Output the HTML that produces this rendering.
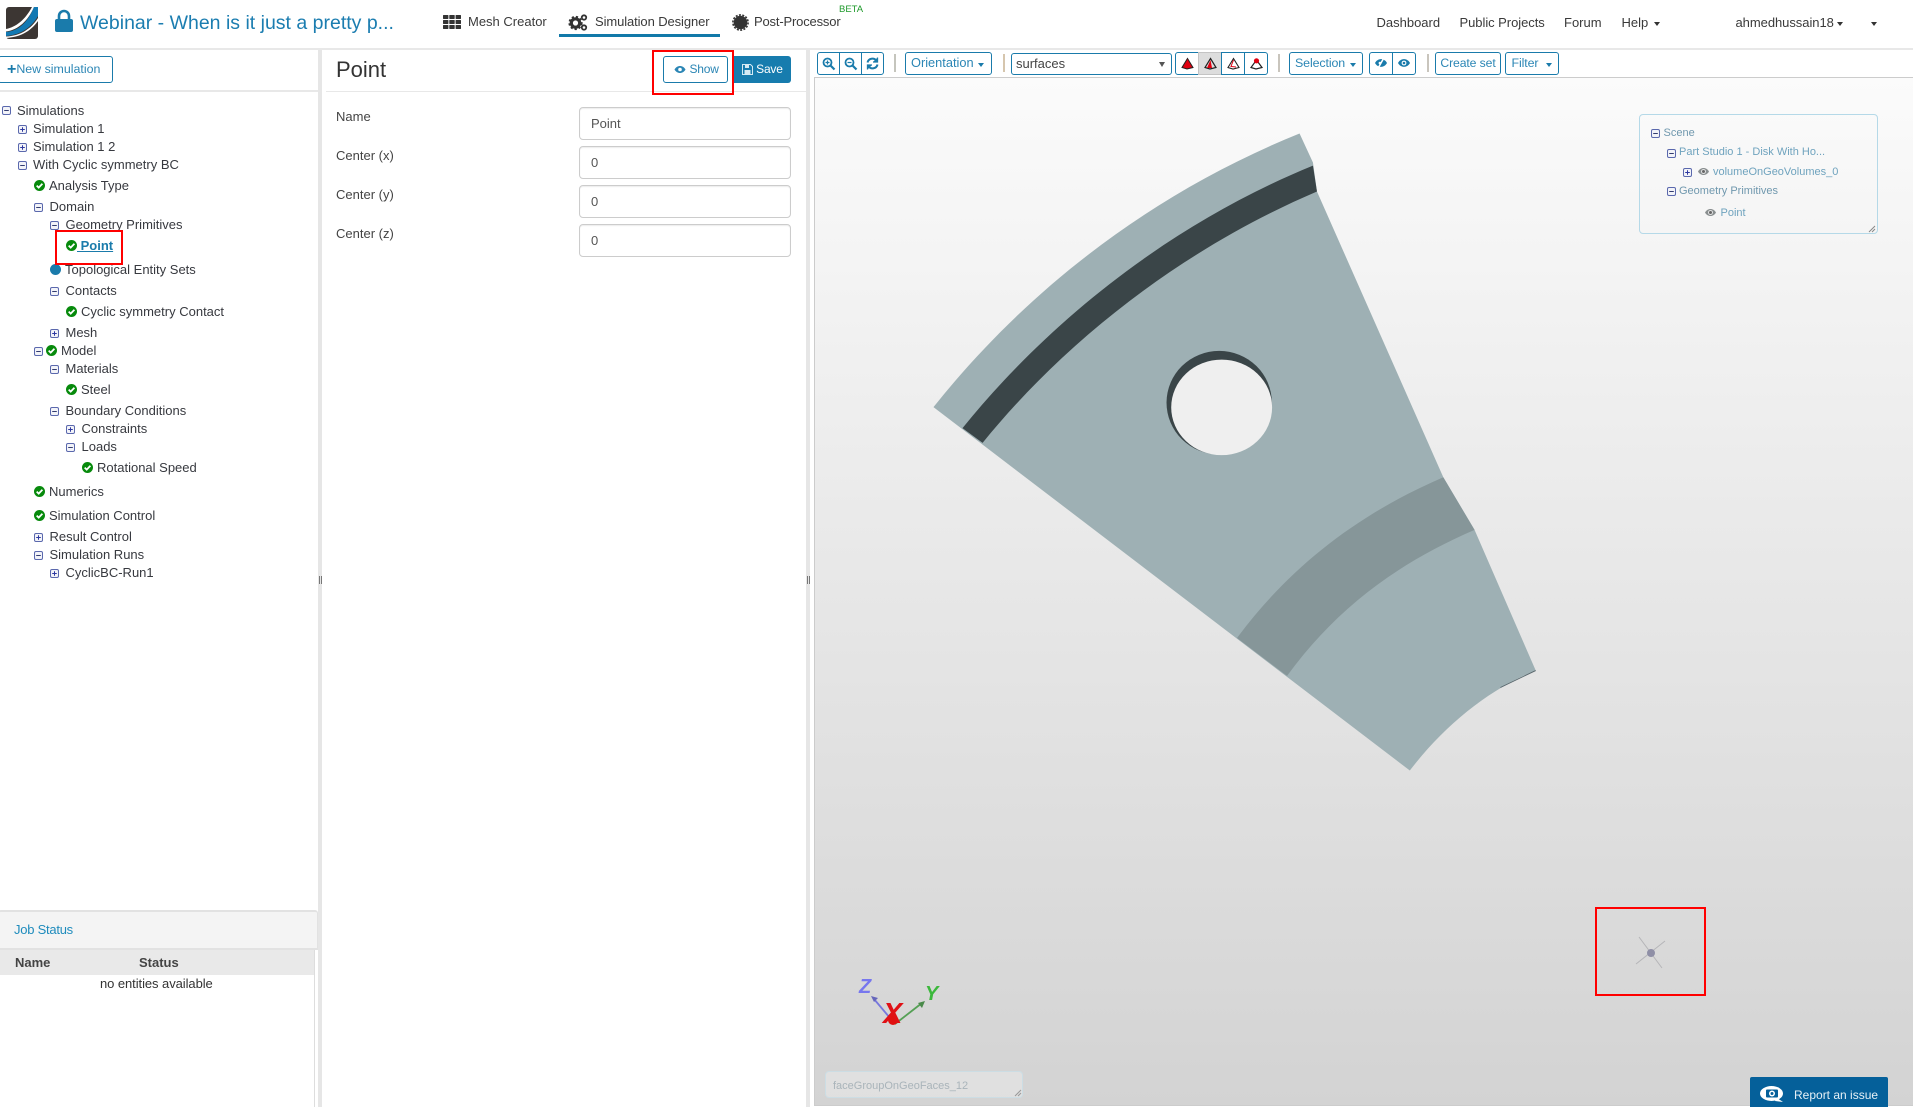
<!DOCTYPE html>
<html><head><meta charset="utf-8"><title>Simulation Designer</title>
<style>
html,body{margin:0;padding:0;background:#fff}
#p{position:relative;width:1913px;height:1107px;overflow:hidden;font-family:"Liberation Sans",sans-serif;font-size:13px;color:#333}
.t{position:absolute;white-space:nowrap;line-height:20px;height:20px}
.b{position:absolute;box-sizing:border-box}
.tr{font-size:13px;color:#37393f}
.nav{color:#3a3a3a}
.btn{position:absolute;box-sizing:border-box;border:1.5px solid #1a7bab;border-radius:3px;color:#2b86b5;background:#fff;text-align:center;line-height:20px;white-space:nowrap;font-size:12.2px;height:23px}
.caret{position:absolute;width:0;height:0;border-left:3.5px solid transparent;border-right:3.5px solid transparent;border-top:4px solid #333}
.inp{position:absolute;left:579px;width:212px;height:33px;box-sizing:border-box;border:1px solid #ccc;border-radius:4px;background:#fff;color:#555;padding-left:11px;line-height:32px;font-size:13px;box-shadow:inset 0 1px 1px rgba(0,0,0,.075)}
.lab{left:336px;color:#444;font-size:13px}
.red{position:absolute;box-sizing:border-box;border:2px solid #f00;z-index:9}
svg.i{position:absolute;overflow:visible}
.sc{position:absolute;white-space:nowrap;font-size:11px;line-height:14px;color:#6fa3be}
</style></head><body><div id="p">
<svg width="0" height="0" style="position:absolute"><defs>
<g id="m"><rect x=".5" y=".5" width="8" height="8" rx="1.5" fill="#f2f3f8" stroke="#5a68ad"/><path d="M2.2 4.5h4.6" stroke="#333c70" stroke-width="1"/></g>
<g id="l"><rect x=".5" y=".5" width="8" height="8" rx="1.5" fill="#f2f3f8" stroke="#5a68ad"/><path d="M2.2 4.5h4.6M4.5 2.2v4.6" stroke="#2d38a0" stroke-width="1"/></g>
<g id="c"><circle cx="5.5" cy="5.5" r="5.5" fill="#078a0c"/><path d="M2.7 5.6l2 2 3.7-3.8" fill="none" stroke="#fff" stroke-width="1.8"/></g>
<g id="e"><path d="M0 4.5C2.5 -.2 8.5 -.2 11 4.5 8.5 9.2 2.5 9.2 0 4.5z" fill="#8a8f90"/><circle cx="5.5" cy="4.5" r="2.4" fill="#eee"/><circle cx="5.5" cy="4.5" r="1.5" fill="#666"/></g>
</defs></svg>

<!-- navbar -->
<div class="b" style="left:0;top:48px;width:1913px;height:2px;background:#e8e8e8"></div>
<svg class="i" style="left:6px;top:7px" width="32" height="32" viewBox="0 0 32 32"><rect width="32" height="32" rx="3" fill="#3c3633"/><path d="M0 22C10 20 19 13 26 0H28C22 14 12 23 0 24.5z" fill="#fff"/><path d="M0 25C13 24 22 15 28 0H32V9C25 21 14 28 0 29z" fill="#1279b3"/><path d="M0 29.5C14 29 25 22 32 11V14C24 25 14 30 0 31z" fill="#fff"/></svg>
<svg class="i" style="left:55px;top:10px" width="18" height="22" viewBox="0 0 18 22"><path d="M4 10V6a5 5 0 0 1 10 0v4" fill="none" stroke="#1a7bab" stroke-width="2.6"/><rect x="0" y="9" width="18" height="13" rx="2" fill="#1a7bab"/></svg>
<div class="t" style="left:80px;top:13px;font-size:19.5px;line-height:20px;color:#1b7db0">Webinar - When is it just a pretty p...</div>

<svg class="i" style="left:443px;top:15px" width="18" height="14" viewBox="0 0 18 14" fill="#333"><rect width="5.4" height="4" rx=".6"/><rect x="6.3" width="5.4" height="4" rx=".6"/><rect x="12.6" width="5.4" height="4" rx=".6"/><rect y="5" width="5.4" height="4" rx=".6"/><rect x="6.3" y="5" width="5.4" height="4" rx=".6"/><rect x="12.6" y="5" width="5.4" height="4" rx=".6"/><rect y="10" width="5.4" height="4" rx=".6"/><rect x="6.3" y="10" width="5.4" height="4" rx=".6"/><rect x="12.6" y="10" width="5.4" height="4" rx=".6"/></svg>
<div class="t nav" style="left:468px;top:12px">Mesh Creator</div>
<svg class="i" style="left:569px;top:14px" width="19" height="17" viewBox="0 0 19 17"><circle cx="6.5" cy="9" r="4.2" fill="none" stroke="#333" stroke-width="3.2"/><circle cx="6.5" cy="9" r="6.2" fill="none" stroke="#333" stroke-width="1.8" stroke-dasharray="2.2 2"/><circle cx="15" cy="3.5" r="2.2" fill="none" stroke="#333" stroke-width="1.8"/><circle cx="15" cy="13.5" r="2.2" fill="none" stroke="#333" stroke-width="1.8"/></svg>
<div class="t nav" style="left:595px;top:12px;letter-spacing:-.1px">Simulation Designer</div>
<div class="b" style="left:559px;top:34px;width:161px;height:3px;background:#1279a9"></div>
<svg class="i" style="left:732px;top:14px" width="17" height="17" viewBox="0 0 17 17"><circle cx="8.5" cy="8.5" r="6.8" fill="#333"/><circle cx="8.5" cy="8.5" r="7.6" fill="none" stroke="#333" stroke-width="1.6" stroke-dasharray="2 1.4"/></svg>
<div class="t nav" style="left:754px;top:12px;letter-spacing:-.17px">Post-Processor</div>
<div class="t" style="left:839px;top:0;font-size:9.5px;color:#1e9a2b">BETA</div>
<div class="t nav" style="left:1376.5px;top:13px">Dashboard</div>
<div class="t nav" style="left:1459.5px;top:13px;letter-spacing:-.05px">Public Projects</div>
<div class="t nav" style="left:1564px;top:13px">Forum</div>
<div class="t nav" style="left:1621.5px;top:13px">Help</div>
<div class="caret" style="left:1654px;top:22px"></div>
<div class="t nav" style="left:1735.5px;top:13px;letter-spacing:-.05px">ahmedhussain18</div>
<div class="caret" style="left:1837px;top:22px"></div>
<div class="caret" style="left:1870.5px;top:22px"></div>

<!-- dividers -->
<div class="b" style="left:318px;top:50px;width:4px;height:1057px;background:#e6e6e6"></div>
<div class="b" style="left:806px;top:50px;width:4px;height:1057px;background:#e6e6e6"></div>
<div class="b" style="left:319px;top:576px;width:3px;height:8px;border-left:1px solid #777;border-right:1px solid #777"></div>
<div class="b" style="left:807px;top:576px;width:3px;height:8px;border-left:1px solid #777;border-right:1px solid #777"></div>

<!-- left panel -->
<div class="btn" style="left:-2px;top:56px;width:115px;height:27px;line-height:24px;color:#2b86b5;font-size:12.4px;text-align:left;padding-left:8px"><b style="font-size:16px;line-height:12px;vertical-align:-1px;color:#1a7bab">+</b>New simulation</div>
<div class="b" style="left:0;top:90px;width:318px;height:2px;background:#e8e8e8"></div>

<svg class="i" style="left:2px;top:106px" width="9" height="9"><use href="#m"/></svg><div class="t tr" style="left:17px;top:101px">Simulations</div>
<svg class="i" style="left:18px;top:125px" width="9" height="9"><use href="#l"/></svg><div class="t tr" style="left:33px;top:119px">Simulation 1</div>
<svg class="i" style="left:18px;top:143px" width="9" height="9"><use href="#l"/></svg><div class="t tr" style="left:33px;top:137px">Simulation 1 2</div>
<svg class="i" style="left:18px;top:161px" width="9" height="9"><use href="#m"/></svg><div class="t tr" style="left:33px;top:155px">With Cyclic symmetry BC</div>
<svg class="i" style="left:34px;top:180px" width="11" height="11"><use href="#c"/></svg><div class="t tr" style="left:49px;top:176px">Analysis Type</div>
<svg class="i" style="left:34px;top:203px" width="9" height="9"><use href="#m"/></svg><div class="t tr" style="left:49.5px;top:197px">Domain</div>
<svg class="i" style="left:50px;top:221px" width="9" height="9"><use href="#m"/></svg><div class="t tr" style="left:65.5px;top:215px">Geometry Primitives</div>
<svg class="i" style="left:66px;top:240px" width="11" height="11"><use href="#c"/></svg><div class="t tr" style="left:77px;top:236px;color:#1a7bab;font-weight:bold;text-decoration:underline;white-space:pre;font-size:13px"> Point</div>
<div class="red" style="left:55px;top:230px;width:68px;height:35px"></div>
<svg class="i" style="left:50px;top:264px" width="11" height="11"><circle cx="5.5" cy="5.5" r="5.5" fill="#1a7bab"/></svg><div class="t tr" style="left:65px;top:260px">Topological Entity Sets</div>
<svg class="i" style="left:50px;top:287px" width="9" height="9"><use href="#m"/></svg><div class="t tr" style="left:65.5px;top:281px">Contacts</div>
<svg class="i" style="left:66px;top:306px" width="11" height="11"><use href="#c"/></svg><div class="t tr" style="left:81px;top:302px">Cyclic symmetry Contact</div>
<svg class="i" style="left:50px;top:329px" width="9" height="9"><use href="#l"/></svg><div class="t tr" style="left:65.5px;top:323px">Mesh</div>
<svg class="i" style="left:34px;top:347px" width="9" height="9"><use href="#m"/></svg><svg class="i" style="left:46px;top:345px" width="11" height="11"><use href="#c"/></svg><div class="t tr" style="left:61px;top:341px">Model</div>
<svg class="i" style="left:50px;top:365px" width="9" height="9"><use href="#m"/></svg><div class="t tr" style="left:65.5px;top:359px">Materials</div>
<svg class="i" style="left:66px;top:384px" width="11" height="11"><use href="#c"/></svg><div class="t tr" style="left:81px;top:380px">Steel</div>
<svg class="i" style="left:50px;top:407px" width="9" height="9"><use href="#m"/></svg><div class="t tr" style="left:65.5px;top:401px">Boundary Conditions</div>
<svg class="i" style="left:66px;top:425px" width="9" height="9"><use href="#l"/></svg><div class="t tr" style="left:81.5px;top:419px">Constraints</div>
<svg class="i" style="left:66px;top:443px" width="9" height="9"><use href="#m"/></svg><div class="t tr" style="left:81.5px;top:437px">Loads</div>
<svg class="i" style="left:82px;top:462px" width="11" height="11"><use href="#c"/></svg><div class="t tr" style="left:97px;top:458px">Rotational Speed</div>
<svg class="i" style="left:34px;top:486px" width="11" height="11"><use href="#c"/></svg><div class="t tr" style="left:49px;top:482px">Numerics</div>
<svg class="i" style="left:34px;top:510px" width="11" height="11"><use href="#c"/></svg><div class="t tr" style="left:49px;top:506px">Simulation Control</div>
<svg class="i" style="left:34px;top:533px" width="9" height="9"><use href="#l"/></svg><div class="t tr" style="left:49.5px;top:527px">Result Control</div>
<svg class="i" style="left:34px;top:551px" width="9" height="9"><use href="#m"/></svg><div class="t tr" style="left:49.5px;top:545px">Simulation Runs</div>
<svg class="i" style="left:50px;top:569px" width="9" height="9"><use href="#l"/></svg><div class="t tr" style="left:65.5px;top:563px">CyclicBC-Run1</div>

<!-- job status -->
<div class="b" style="left:-2px;top:910px;width:320px;height:40px;background:#f4f4f4;border:1px solid #e2e2e2;border-top:2px solid #e2e2e2;border-bottom:2px solid #e2e2e2;border-radius:3px 3px 0 0"></div>
<div class="t" style="left:14px;top:920px;color:#1f8cbd;font-size:13px;letter-spacing:-.25px">Job Status</div>
<div class="b" style="left:0;top:950px;width:314px;height:25px;background:#e9e9e9"></div>
<div class="b" style="left:314px;top:950px;width:1px;height:157px;background:#ddd"></div>
<div class="t" style="left:15px;top:952.5px;font-weight:bold;color:#444">Name</div>
<div class="t" style="left:139px;top:952.5px;font-weight:bold;color:#444">Status</div>
<div class="t" style="left:100px;top:974px;color:#333;font-size:13px;letter-spacing:-.07px">no entities available</div>

<!-- middle panel -->
<div class="t" style="left:336px;top:60px;font-size:22px;color:#333">Point</div>
<div class="b" style="left:326px;top:91px;width:480px;height:1px;background:#e8e8e8"></div>
<div class="btn" style="left:663px;top:56px;width:65px;height:27px;line-height:24px;padding-left:2px;font-size:12px;letter-spacing:-.2px"><svg width="12" height="9" viewBox="0 0 11 9" style="vertical-align:-1px"><path d="M0 4.5C2.5 -.2 8.5 -.2 11 4.5 8.5 9.2 2.5 9.2 0 4.5z" fill="#2b86b5"/><circle cx="5.5" cy="4.5" r="1.8" fill="#fff"/></svg> Show</div>
<div class="b" style="left:733px;top:56px;width:58px;height:27px;background:#177cae;border-radius:0 3px 3px 0;color:#fff;font-size:12px;letter-spacing:-.2px;line-height:26px;padding-left:9px"><svg width="11" height="11" viewBox="0 0 11 11" style="vertical-align:-1.5px"><path d="M.5.5h8l2 2v8H.5z" fill="none" stroke="#d5eaf4"/><rect x="3" y="1" width="4" height="3" fill="#d5eaf4"/><rect x="2.5" y="6" width="6" height="4" fill="#d5eaf4"/></svg> Save</div>
<div class="red" style="left:652px;top:50px;width:82px;height:45px"></div>
<div class="t lab" style="top:107px">Name</div>
<div class="t lab" style="top:146px">Center (x)</div>
<div class="t lab" style="top:185px">Center (y)</div>
<div class="t lab" style="top:224px">Center (z)</div>
<div class="inp" style="top:107px">Point</div>
<div class="inp" style="top:146px">0</div>
<div class="inp" style="top:185px">0</div>
<div class="inp" style="top:224px">0</div>

<!-- toolbar -->
<div class="btn" style="left:817px;top:52px;width:22.5px;border-radius:3px 0 0 3px"></div>
<div class="btn" style="left:838.5px;top:52px;width:23px;border-radius:0"></div>
<div class="btn" style="left:860.5px;top:52px;width:23px;border-radius:0 3px 3px 0"></div>
<svg class="i" style="left:822px;top:57px" width="13" height="13" viewBox="0 0 13 13" fill="none" stroke="#1a7bab" stroke-width="1.8"><circle cx="5.5" cy="5.5" r="4"/><path d="M8.5 8.5l4 4" stroke-width="2.2"/><path d="M3.5 5.5h4M5.5 3.5v4" stroke-width="1.2"/></svg>
<svg class="i" style="left:844px;top:57px" width="13" height="13" viewBox="0 0 13 13" fill="none" stroke="#1a7bab" stroke-width="1.8"><circle cx="5.5" cy="5.5" r="4"/><path d="M8.5 8.5l4 4" stroke-width="2.2"/><path d="M3.5 5.5h4" stroke-width="1.2"/></svg>
<svg class="i" style="left:866px;top:57px" width="13" height="13" viewBox="0 0 13 13" fill="none" stroke="#1a7bab" stroke-width="2"><path d="M1.5 5.5A5 5 0 0 1 10.5 3.8M11.5 7.5A5 5 0 0 1 2.5 9.2"/><path d="M11.5 0.5v4.5h-4.5M1.5 12.5V8h4.5" stroke-width="1.3" fill="#1a7bab"/></svg>
<div class="b" style="left:894px;top:54px;width:2px;height:18px;background:#c5c5bd"></div>
<div class="btn" style="left:905px;top:52px;width:87px;text-align:left;padding-left:5px;font-size:12.8px">Orientation</div>
<div class="caret" style="left:978px;top:63px;border-top-color:#1a7bab"></div>
<div class="b" style="left:1003px;top:54px;width:2px;height:18px;background:#d6c6ae"></div>
<div class="b" style="left:1011px;top:53px;width:161px;height:22px;border:1.5px solid #1a7bab;border-radius:3px;background:#fff;color:#444;font-size:13px;line-height:19px;padding-left:4px">surfaces</div>
<svg class="i" style="left:1159px;top:62px" width="6" height="5"><path d="M0 0h6L3 5z" fill="#555"/></svg>
<div class="btn" style="left:1175px;top:52px;width:24px;border-radius:3px 0 0 3px"></div>
<div class="btn" style="left:1198px;top:52px;width:24px;border-radius:0;background:#ddd;border-color:#c4c4c4"></div>
<div class="btn" style="left:1221px;top:52px;width:24px;border-radius:0"></div>
<div class="btn" style="left:1244px;top:52px;width:24px;border-radius:0 3px 3px 0"></div>
<svg class="i" style="left:1181px;top:58px" width="13" height="12" viewBox="0 0 13 12"><path d="M6.5 .5L12 9.5 6 11 1 9.5z" fill="#e00010" stroke="#222" stroke-width="1"/><path d="M6.5 1L4 9h6z" fill="#e00010"/></svg>
<svg class="i" style="left:1204px;top:58px" width="13" height="12" viewBox="0 0 13 12"><path d="M6.5 .5L12 9.5 6 11 1 9.5z" fill="none" stroke="#222" stroke-width="1.2"/><path d="M6.5 2L8 10 3 10z" fill="#e00010"/></svg>
<svg class="i" style="left:1227px;top:58px" width="13" height="12" viewBox="0 0 13 12"><path d="M6.5 .5L12 9.5 6 11 1 9.5z" fill="none" stroke="#222" stroke-width="1.1"/><path d="M6.5 2L4 8.5 9 9" fill="none" stroke="#e00010" stroke-width="1"/></svg>
<svg class="i" style="left:1250px;top:58px" width="13" height="12" viewBox="0 0 13 12"><path d="M6.5 2L12 9.5 6 11 1 9.5z" fill="none" stroke="#222" stroke-width="1.2"/><circle cx="6.5" cy="2.8" r="2.6" fill="#e00010"/></svg>
<div class="b" style="left:1278px;top:54px;width:2px;height:18px;background:#c9c5bd"></div>
<div class="btn" style="left:1289px;top:52px;width:73.5px;text-align:left;padding-left:5px;font-size:12.4px;letter-spacing:-.1px">Selection</div>
<div class="caret" style="left:1350px;top:63px;border-top-color:#1a7bab"></div>
<div class="btn" style="left:1369px;top:52px;width:24px;border-radius:3px 0 0 3px"></div>
<div class="btn" style="left:1392px;top:52px;width:23.5px;border-radius:0 3px 3px 0"></div>
<svg class="i" style="left:1375px;top:58px" width="12" height="10" viewBox="0 0 11 9"><path d="M0 4.5C2.5 -.2 8.5 -.2 11 4.5 8.5 9.2 2.5 9.2 0 4.5z" fill="#1a7bab"/><path d="M3 9L8 0" stroke="#fff" stroke-width="1.4"/><circle cx="4.5" cy="4.5" r="1.2" fill="#fff"/></svg>
<svg class="i" style="left:1398px;top:58px" width="12" height="10" viewBox="0 0 11 9"><path d="M0 4.5C2.5 -.2 8.5 -.2 11 4.5 8.5 9.2 2.5 9.2 0 4.5z" fill="#1a7bab"/><circle cx="5.5" cy="4.5" r="2.2" fill="#fff"/><circle cx="5.5" cy="4.5" r="1.2" fill="#1a7bab"/></svg>
<div class="b" style="left:1426.5px;top:54px;width:2px;height:18px;background:#c9c5bd"></div>
<div class="btn" style="left:1435px;top:52px;width:66px;font-size:12.2px;letter-spacing:-.1px">Create set</div>
<div class="btn" style="left:1505px;top:52px;width:53.5px;text-align:left;padding-left:5.5px;font-size:12.4px;letter-spacing:-.1px">Filter</div>
<div class="caret" style="left:1545.5px;top:63px;border-top-color:#1a7bab"></div>

<!-- viewport -->
<div class="b" style="left:814px;top:77px;width:1099px;height:1029px;border-left:1px solid #ccc;border-top:1px solid #ccc;border-bottom:1px solid #ccc;background:linear-gradient(#fbfbfb,#d3d3d3)"></div>

<svg class="i" style="left:900px;top:100px" width="700" height="700" viewBox="0 0 1568 1568">
<path d="M895 75L925 140 934 205 1217 845 1287 963 1424 1278C1320 1320 1220 1400 1142 1502L75 688C280 430 560 210 895 75z" fill="#9eb0b4"/>
<path d="M140 735C330 500 600 280 925 147L934 205C630 335 370 540 185 768z" fill="#3a4548"/>
<path d="M755 1205C870 1050 1020 930 1217 845L1287 963C1120 1035 980 1135 867 1290z" fill="#869699"/>
<path d="M1345 1316L1424 1278" stroke="#56646a" stroke-width="2" fill="none"/>
<ellipse cx="715" cy="678" rx="118" ry="116" fill="#3a4548"/>
<ellipse cx="720.5" cy="688.5" rx="113" ry="107" fill="#efefef"/>
</svg>

<!-- scene panel -->
<div class="b" style="left:1638.5px;top:114px;width:239px;height:120px;border:1px solid #b5d9e8;border-radius:4px"></div>
<svg class="i" style="left:1868px;top:225px" width="8" height="8"><path d="M1 7L7 1M4 7L7 4" stroke="#888" stroke-width="1"/></svg>
<svg class="i" style="left:1651px;top:129px" width="9" height="9"><use href="#m"/></svg><div class="sc" style="left:1663.5px;top:125.5px;color:#7098ae">Scene</div>
<svg class="i" style="left:1667px;top:149px" width="9" height="9"><use href="#m"/></svg><div class="sc" style="left:1679px;top:144.5px">Part Studio 1 - Disk With Ho...</div>
<svg class="i" style="left:1683px;top:168px" width="9" height="9"><use href="#l"/></svg><svg class="i" style="left:1698px;top:167px" width="11" height="9"><use href="#e"/></svg><div class="sc" style="left:1713px;top:164.5px">volumeOnGeoVolumes_0</div>
<svg class="i" style="left:1667px;top:187px" width="9" height="9"><use href="#m"/></svg><div class="sc" style="left:1679px;top:183.5px;color:#7098ae">Geometry Primitives</div>
<svg class="i" style="left:1704.5px;top:208px" width="11" height="9"><use href="#e"/></svg><div class="sc" style="left:1720.5px;top:205.5px">Point</div>

<!-- axes -->
<svg class="i" style="left:850px;top:970px" width="90" height="70" viewBox="850 970 90 70">
<path d="M895 1024L874 999" stroke="#7777dd" stroke-width="1.8"/><path d="M871 996l7 2-4 4z" fill="#6666bb"/>
<path d="M895 1024L922 1003" stroke="#55a055" stroke-width="1.8"/><path d="M925 1001l-3 7-4-5z" fill="#4a8a4a"/>
<circle cx="893" cy="1020" r="5" fill="#e01010"/>
<text x="859" y="993" font-family="Liberation Sans" font-weight="bold" font-style="italic" font-size="20" fill="#7777ee">Z</text>
<text x="925" y="1000" font-family="Liberation Sans" font-weight="bold" font-style="italic" font-size="20" fill="#3cb83c">Y</text>
<text x="883" y="1023" font-family="Liberation Sans" font-weight="bold" font-style="italic" font-size="29" fill="#e01015">X</text>
</svg>

<!-- selected label -->
<div class="b" style="left:825px;top:1071px;width:198px;height:27px;background:rgba(255,255,255,.28);border:1px solid #ccdde4;border-radius:4px"></div>
<div class="t" style="left:833px;top:1075.5px;font-size:11px;color:#a9b4ba">faceGroupOnGeoFaces_12</div>
<svg class="i" style="left:1014px;top:1089px" width="8" height="8"><path d="M1 7L7 1M4 7L7 4" stroke="#999" stroke-width="1"/></svg>

<!-- point marker -->
<div class="red" style="left:1595px;top:907px;width:111px;height:89px"></div>
<svg class="i" style="left:1630px;top:930px" width="44" height="44" viewBox="1630 930 44 44"><path d="M1639 937L1662 968M1665 941L1636 964" stroke="#b5b5b8" stroke-width="1"/><circle cx="1651" cy="953" r="4" fill="#8f8fa6"/></svg>

<!-- report -->
<div class="b" style="left:1750px;top:1077px;width:138px;height:30px;background:#05609a;border-radius:2px 2px 0 0"></div>
<svg class="i" style="left:1760px;top:1086px" width="24" height="16" viewBox="0 0 24 16"><ellipse cx="11.5" cy="7.5" rx="11.5" ry="7.5" fill="#fff"/><path d="M17 12l6 4-8-1z" fill="#fff"/><rect x="6" y="3.5" width="12" height="8" rx="1" fill="#05609a"/><circle cx="12" cy="7.5" r="3" fill="#fff"/><circle cx="12" cy="7.5" r="1.5" fill="#05609a"/></svg>
<div class="t" style="left:1794px;top:1085px;color:#e6f0f6;font-size:12px">Report an issue</div>
</div></body></html>
